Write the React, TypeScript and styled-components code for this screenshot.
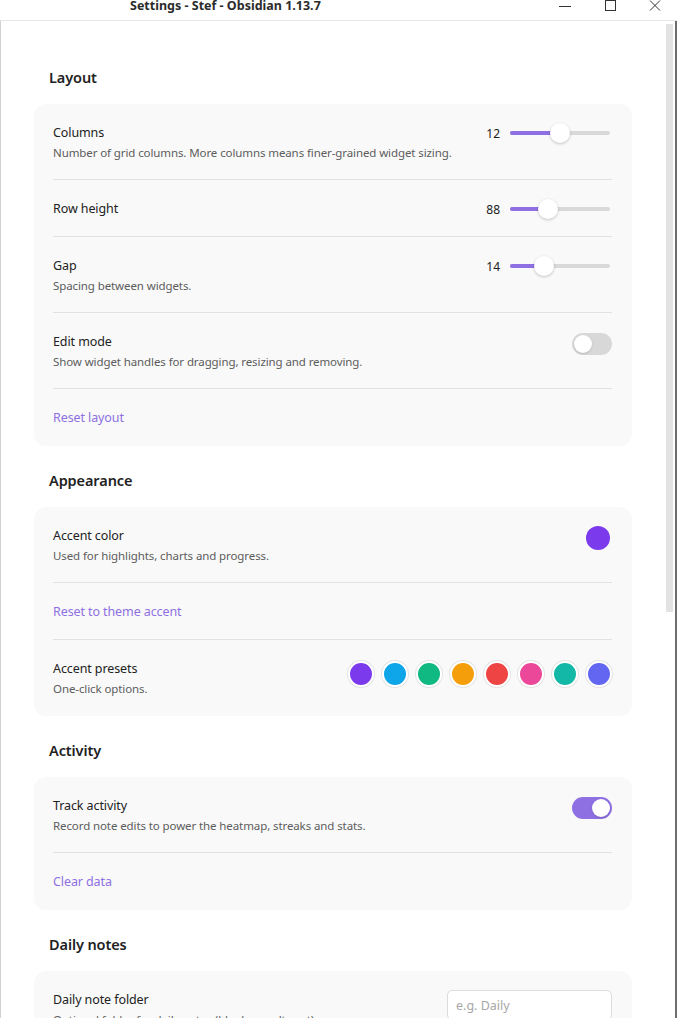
import styled, { createGlobalStyle } from "styled-components";

const GlobalStyle = createGlobalStyle`
  html, body {
    margin: 0;
    padding: 0;
    background: #ffffff;
    overflow: hidden;
  }
  body {
    font-family: "Noto Sans", "Open Sans", sans-serif;
    color: #222222;
  }
  * {
    box-sizing: border-box;
  }
`;

const ACCENT = "#8e70e2";

const Window = styled.div`
  display: flex;
  flex-direction: column;
  width: 677px;
  height: 1018px;
  overflow: hidden;
`;

const TitleBar = styled.div`
  display: flex;
  align-items: flex-start;
  height: 21px;
  border-bottom: 1px solid #e6e6e6;
  background: #ffffff;
`;

const TitleText = styled.div`
  flex: 1;
  padding-left: 130px;
  margin-top: -1px;
  font-size: 12.5px;
  font-weight: 700;
  line-height: 14px;
  color: #2b2b2b;
`;

const Controls = styled.div`
  display: flex;
`;

const ControlButton = styled.div`
  display: flex;
  justify-content: center;
  width: 45px;
  height: 20px;
`;

const Body = styled.div`
  flex: 1;
  display: flex;
  min-height: 0;
  border-left: 1px solid #d2d2d2;
  border-right: 2px solid #6e6e6e;
`;

const Content = styled.div`
  flex: 1;
  padding: 22px 33px 0 33px;
  overflow: hidden;
`;

const ScrollTrack = styled.div`
  width: 10px;
  padding: 3px 2px 0 1px;
`;

const ScrollThumb = styled.div`
  height: 588px;
  background: #e3e3e3;
`;

const Heading = styled.div`
  padding: 24px 0 17px 15px;
  font-size: 14.5px;
  font-weight: 600;
  line-height: 20px;
  letter-spacing: -0.1px;
  color: #222222;
`;

const Card = styled.div`
  background: #f9f9f9;
  border-radius: 12px;
  padding: 0 20px 1px 19px;
`;

const Row = styled.div`
  display: flex;
  align-items: flex-start;
  justify-content: space-between;
  gap: 16px;
  padding: 19px 0 17px;
  border-bottom: 1px solid #e2e2e2;

  &:last-child {
    border-bottom: none;
  }
`;

const Info = styled.div`
  flex: 1;
  min-width: 0;
`;

const Name = styled.div`
  font-size: 12.5px;
  line-height: 20px;
  letter-spacing: -0.1px;
  color: #222222;
`;

const Desc = styled.div`
  margin-top: 1px;
  font-size: 11.5px;
  line-height: 18px;
  letter-spacing: -0.1px;
  color: #5c5c5c;
  white-space: nowrap;
`;

const LinkText = styled.div`
  font-size: 12.5px;
  line-height: 20px;
  letter-spacing: -0.1px;
  color: ${ACCENT};
  cursor: pointer;
`;

const SliderWrap = styled.div`
  display: flex;
  align-items: center;
  gap: 10px;
  height: 20px;
  margin-right: 2px;
`;

const SliderValue = styled.span`
  font-size: 12px;
  color: #222222;
`;

const Track = styled.div`
  position: relative;
  width: 100px;
  height: 4px;
  border-radius: 2px;
  background: #d9d9d9;
`;

const Fill = styled.div`
  position: absolute;
  left: 0;
  top: 0;
  height: 4px;
  border-radius: 2px;
  background: ${ACCENT};
`;

const Thumb = styled.div`
  position: absolute;
  top: -8px;
  width: 20px;
  height: 20px;
  margin-left: -10px;
  border-radius: 50%;
  background: #ffffff;
  box-shadow: 0 1px 3px rgba(0, 0, 0, 0.22);
`;

const Toggle = styled.div<{ $on?: boolean }>`
  display: flex;
  justify-content: ${(p) => (p.$on ? "flex-end" : "flex-start")};
  width: 40px;
  height: 22px;
  margin-top: 1px;
  padding: 2px;
  border-radius: 11px;
  background: ${(p) => (p.$on ? ACCENT : "#d8d8d8")};
`;

const Knob = styled.div`
  width: 18px;
  height: 18px;
  border-radius: 50%;
  background: #ffffff;
  box-shadow: 0 1px 2px rgba(0, 0, 0, 0.15);
`;

const Swatch = styled.div<{ $color: string }>`
  width: 24px;
  height: 24px;
  margin-right: 2px;
  border-radius: 50%;
  background: ${(p) => p.$color};
`;

const Presets = styled.div`
  display: flex;
  gap: 8px;
  margin-top: 2px;
`;

const Preset = styled.div<{ $color: string }>`
  width: 26px;
  height: 26px;
  border-radius: 50%;
  border: 2px solid #ffffff;
  box-shadow: 0 0 0 1px #e4e4e4;
  background: ${(p) => p.$color};
`;

const TextInput = styled.input`
  width: 165px;
  height: 30px;
  padding: 0 8px;
  border: 1px solid #dcdcdc;
  border-radius: 5px;
  background: #ffffff;
  font-family: inherit;
  font-size: 12.5px;
  color: #222222;

  &::placeholder {
    color: #a8a8a8;
  }
`;

type SliderProps = { value: number; pos: number };

const Slider = ({ value, pos }: SliderProps) => (
  <SliderWrap>
    <SliderValue>{value}</SliderValue>
    <Track>
      <Fill style={{ width: `${10 + pos * 80}px` }} />
      <Thumb style={{ left: `${10 + pos * 80}px` }} />
    </Track>
  </SliderWrap>
);

const presetColors = [
  "#7c3aed",
  "#0ea5e9",
  "#10b981",
  "#f59e0b",
  "#ef4444",
  "#ec4899",
  "#14b8a6",
  "#6366f1",
];

const App = () => {
  return (
    <>
      <GlobalStyle />
      <Window>
        <TitleBar>
          <TitleText>Settings - Stef - Obsidian 1.13.7</TitleText>
          <Controls>
            <ControlButton>
              <svg width="12" height="12" viewBox="0 0 12 12">
                <line x1="0" y1="6.5" x2="12" y2="6.5" stroke="#333" strokeWidth="1" />
              </svg>
            </ControlButton>
            <ControlButton>
              <svg width="12" height="12" viewBox="0 0 12 12">
                <rect x="1.5" y="0.5" width="10" height="10" fill="none" stroke="#333" strokeWidth="1" />
              </svg>
            </ControlButton>
            <ControlButton>
              <svg width="12" height="12" viewBox="0 0 12 12">
                <path d="M1 0.5 L11 10.5 M11 0.5 L1 10.5" stroke="#333" strokeWidth="1" />
              </svg>
            </ControlButton>
          </Controls>
        </TitleBar>

        <Body>
          <Content>
            <Heading>Layout</Heading>
            <Card>
              <Row>
                <Info>
                  <Name>Columns</Name>
                  <Desc>Number of grid columns. More columns means finer-grained widget sizing.</Desc>
                </Info>
                <Slider value={12} pos={0.5} />
              </Row>
              <Row>
                <Info>
                  <Name>Row height</Name>
                </Info>
                <Slider value={88} pos={0.35} />
              </Row>
              <Row>
                <Info>
                  <Name>Gap</Name>
                  <Desc>Spacing between widgets.</Desc>
                </Info>
                <Slider value={14} pos={0.3} />
              </Row>
              <Row>
                <Info>
                  <Name>Edit mode</Name>
                  <Desc>Show widget handles for dragging, resizing and removing.</Desc>
                </Info>
                <Toggle>
                  <Knob />
                </Toggle>
              </Row>
              <Row>
                <LinkText>Reset layout</LinkText>
              </Row>
            </Card>

            <Heading>Appearance</Heading>
            <Card>
              <Row>
                <Info>
                  <Name>Accent color</Name>
                  <Desc>Used for highlights, charts and progress.</Desc>
                </Info>
                <Swatch $color="#7c3aed" />
              </Row>
              <Row>
                <LinkText>Reset to theme accent</LinkText>
              </Row>
              <Row>
                <Info>
                  <Name>Accent presets</Name>
                  <Desc>One-click options.</Desc>
                </Info>
                <Presets>
                  {presetColors.map((c) => (
                    <Preset key={c} $color={c} />
                  ))}
                </Presets>
              </Row>
            </Card>

            <Heading>Activity</Heading>
            <Card>
              <Row>
                <Info>
                  <Name>Track activity</Name>
                  <Desc>Record note edits to power the heatmap, streaks and stats.</Desc>
                </Info>
                <Toggle $on>
                  <Knob />
                </Toggle>
              </Row>
              <Row>
                <LinkText>Clear data</LinkText>
              </Row>
            </Card>

            <Heading>Daily notes</Heading>
            <Card>
              <Row>
                <Info>
                  <Name>Daily note folder</Name>
                  <Desc>Optional folder for daily notes (blank = vault root).</Desc>
                </Info>
                <TextInput placeholder="e.g. Daily" />
              </Row>
            </Card>
          </Content>
          <ScrollTrack>
            <ScrollThumb />
          </ScrollTrack>
        </Body>
      </Window>
    </>
  );
};

export default App;
